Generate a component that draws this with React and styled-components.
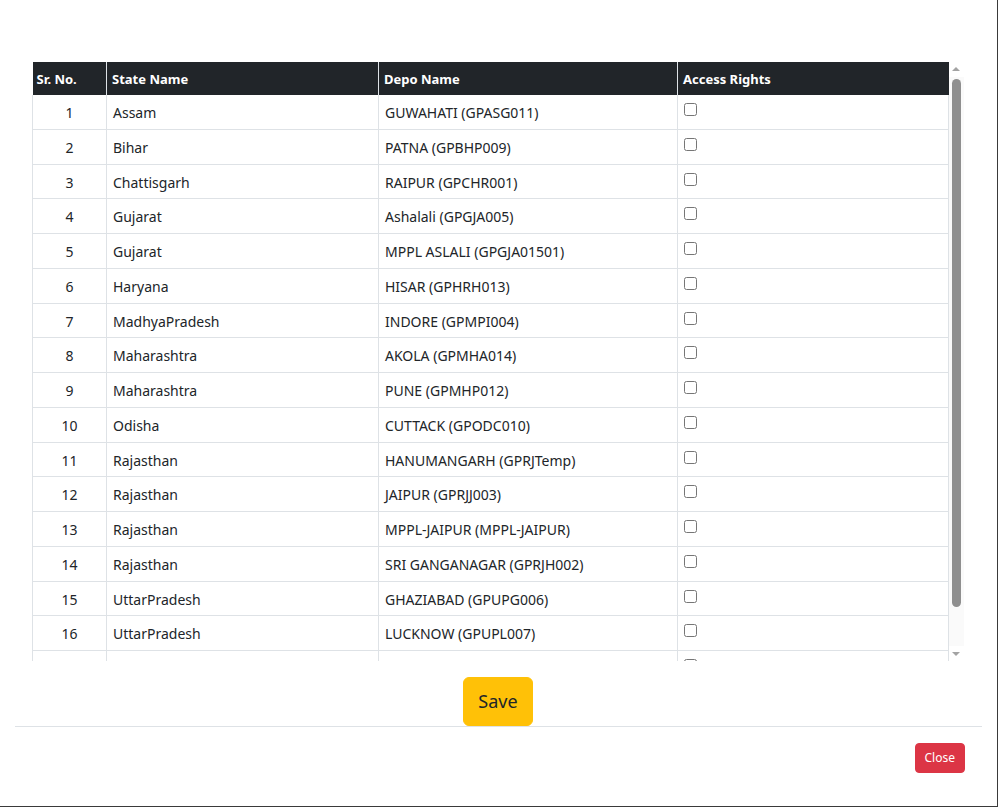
import React from "react";
import styled, { createGlobalStyle } from "styled-components";

const depots = [
  { state: "Assam", depo: "GUWAHATI (GPASG011)" },
  { state: "Bihar", depo: "PATNA (GPBHP009)" },
  { state: "Chattisgarh", depo: "RAIPUR (GPCHR001)" },
  { state: "Gujarat", depo: "Ashalali (GPGJA005)" },
  { state: "Gujarat", depo: "MPPL ASLALI (GPGJA01501)" },
  { state: "Haryana", depo: "HISAR (GPHRH013)" },
  { state: "MadhyaPradesh", depo: "INDORE (GPMPI004)" },
  { state: "Maharashtra", depo: "AKOLA (GPMHA014)" },
  { state: "Maharashtra", depo: "PUNE (GPMHP012)" },
  { state: "Odisha", depo: "CUTTACK (GPODC010)" },
  { state: "Rajasthan", depo: "HANUMANGARH (GPRJTemp)" },
  { state: "Rajasthan", depo: "JAIPUR (GPRJJ003)" },
  { state: "Rajasthan", depo: "MPPL-JAIPUR (MPPL-JAIPUR)" },
  { state: "Rajasthan", depo: "SRI GANGANAGAR (GPRJH002)" },
  { state: "UttarPradesh", depo: "GHAZIABAD (GPUPG006)" },
  { state: "UttarPradesh", depo: "LUCKNOW (GPUPL007)" },
  { state: "UttarPradesh", depo: "VARANASI (GPUPV008)" },
];

const GlobalStyle = createGlobalStyle`
  * { box-sizing: border-box; }
  html, body {
    margin: 0;
    padding: 0;
    background: #fff;
  }
  body {
    font-family: "Noto Sans", "Open Sans", "Liberation Sans", sans-serif;
    color: #212529;
  }
`;

const App = () => {
  return (
    <>
      <GlobalStyle />
      <Window>
        <ModalContent>
          <ModalBody>
            <TableArea>
              <TableScroll>
                <Table>
                  <colgroup>
                    <col style={{ width: 74 }} />
                    <col style={{ width: 272 }} />
                    <col style={{ width: 299 }} />
                    <col />
                  </colgroup>
                  <thead>
                    <tr>
                      <HeadCell>Sr. No.</HeadCell>
                      <HeadCell>State Name</HeadCell>
                      <HeadCell>Depo Name</HeadCell>
                      <HeadCell>Access Rights</HeadCell>
                    </tr>
                  </thead>
                  <tbody>
                    {depots.map((d, i) => (
                      <tr key={i}>
                        <Cell $center>{i + 1}</Cell>
                        <Cell>{d.state}</Cell>
                        <Cell>{d.depo}</Cell>
                        <Cell>
                          <Check type="checkbox" />
                        </Cell>
                      </tr>
                    ))}
                  </tbody>
                </Table>
              </TableScroll>
              <ScrollBar>
                <ScrollArrow $dir="up" />
                <ScrollTrack>
                  <ScrollThumb />
                </ScrollTrack>
                <ScrollArrow $dir="down" />
              </ScrollBar>
            </TableArea>
            <SaveRow>
              <SaveButton>Save</SaveButton>
            </SaveRow>
          </ModalBody>
          <ModalFooter>
            <CloseButton>Close</CloseButton>
          </ModalFooter>
        </ModalContent>
      </Window>
    </>
  );
};

export default App;

const Window = styled.div`
  width: 998px;
  height: 807px;
  background: #fff;
  border-right: 1px solid #3a3a3a;
  border-bottom: 1px solid #3a3a3a;
  overflow: hidden;
`;

const ModalContent = styled.div`
  margin: 0 15px;
  display: flex;
  flex-direction: column;
`;

const ModalBody = styled.div`
  padding: 62px 18px 0 17px;
`;

const TableArea = styled.div`
  display: flex;
  height: 599px;
`;

const TableScroll = styled.div`
  flex: 1;
  overflow: hidden;
`;

const ScrollBar = styled.div`
  width: 15px;
  display: flex;
  flex-direction: column;
  background: #fafafa;
`;

const ScrollArrow = styled.div`
  height: 15px;
  background: #fff;
  position: relative;

  &::after {
    content: "";
    position: absolute;
    left: 3px;
    ${(p) => (p.$dir === "up" ? "top: 5px;" : "top: 6px;")}
    border-left: 4px solid transparent;
    border-right: 4px solid transparent;
    ${(p) =>
      p.$dir === "up"
        ? "border-bottom: 4px solid #a3a3a3;"
        : "border-top: 4px solid #a3a3a3;"}
  }
`;

const ScrollTrack = styled.div`
  flex: 1;
  padding: 2px 3px 0 3px;
`;

const ScrollThumb = styled.div`
  height: 528px;
  width: 9px;
  background: #8f8f8f;
  border-radius: 5px;
`;

const Table = styled.table`
  width: 100%;
  table-layout: fixed;
  border-collapse: collapse;
  font-size: 14px;
`;

const HeadCell = styled.th`
  background: #212529;
  color: #fff;
  font-size: 13px;
  font-weight: 700;
  text-align: left;
  padding: 8px 5px 6px 5px;
  line-height: 19px;
  border-left: 1px solid #dee2e6;
  border-right: 1px solid #dee2e6;
  white-space: nowrap;

  &:first-child {
    border-left: none;
    padding-left: 4px;
  }
  &:last-child {
    border-right: none;
  }
`;

const Cell = styled.td`
  padding: 8px 6px 6px;
  line-height: 19.75px;
  vertical-align: top;
  text-align: ${(p) => (p.$center ? "center" : "left")};
  border: 1px solid #dee2e6;
  border-top: none;
  color: #212529;
  white-space: nowrap;
`;

const Check = styled.input`
  width: 13px;
  height: 13px;
  margin: 0;
  vertical-align: top;
`;

const SaveRow = styled.div`
  display: flex;
  justify-content: center;
  padding-top: 16px;
`;

const SaveButton = styled.button`
  font-family: inherit;
  font-size: 18px;
  line-height: 27px;
  padding: 10px 14px;
  color: #212529;
  background: #ffc107;
  border: 1px solid #ffc107;
  border-radius: 6px;
  cursor: pointer;
`;

const ModalFooter = styled.div`
  display: flex;
  justify-content: flex-end;
  border-top: 1px solid #dee2e6;
  padding: 16px 17px 16px 16px;
`;

const CloseButton = styled.button`
  font-family: inherit;
  font-size: 12px;
  line-height: 21px;
  padding: 3px 9px 4px;
  color: #fff;
  background: #dc3545;
  border: 1px solid #dc3545;
  border-radius: 4px;
  cursor: pointer;
`;
